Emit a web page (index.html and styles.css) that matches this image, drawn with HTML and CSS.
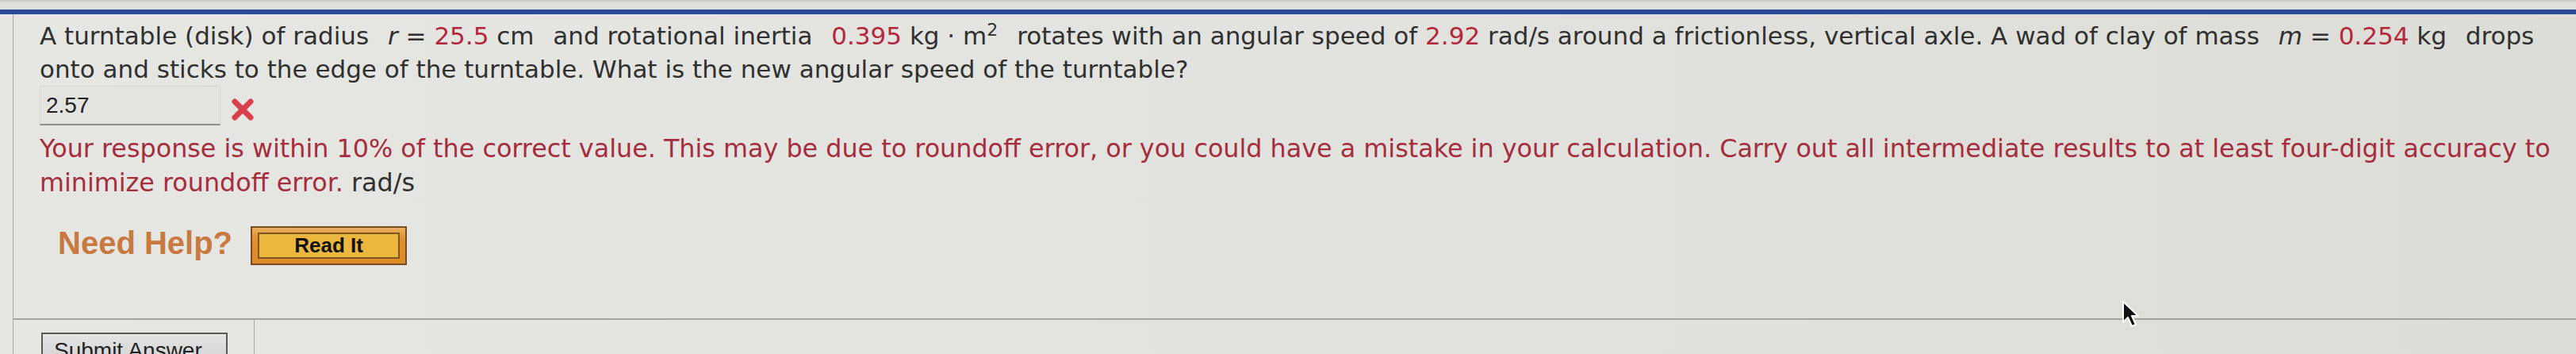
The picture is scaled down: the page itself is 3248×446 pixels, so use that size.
FILE: index.html
```html
<!DOCTYPE html>
<html lang="en">
<head>
    <meta charset="UTF-8">
    <title>Turntable question</title>
    <link rel="stylesheet" href="styles.css">
</head>
<body>
    <div class="chrome"></div>
    <div class="rule"></div>

    <div class="panel">
        <div class="content">
            <p class="question">
                A turntable (disk) of radius <span class="math"><i>r</i> = <span class="val">25.5</span> cm</span> and rotational inertia <span class="math"><span class="val">0.395</span> kg &middot; m<sup>2</sup></span> rotates with an angular speed of <span class="val">2.92</span> rad/s around a frictionless, vertical axle. A wad of clay of mass <span class="math"><i>m</i> = <span class="val">0.254</span> kg</span> drops<br>
                onto and sticks to the edge of the turntable. What is the new angular speed of the turntable?
            </p>

            <div class="answer-row">
                <div class="answer-box">2.57</div>
                <svg class="wrong" width="30" height="30" viewBox="0 0 30 30">
                    <path d="M5 5 L25 25 M25 5 L5 25" stroke="#d8404a" stroke-width="7" stroke-linecap="round"/>
                </svg>
            </div>

            <p class="feedback">
                Your response is within 10% of the correct value. This may be due to roundoff error, or you could have a mistake in your calculation. Carry out all intermediate results to at least four-digit accuracy to<br>
                minimize roundoff error. <span class="unit">rad/s</span>
            </p>

            <div class="help-row">
                <span class="need-help">Need Help?</span>
                <button class="read-it"><span class="read-it-inner">Read It</span></button>
            </div>
        </div>

        <div class="footer">
            <div class="footer-left">
                <button class="submit-btn">Submit Answer</button>
            </div>
            <div class="footer-right"></div>
        </div>
    </div>

    <!-- mouse pointer caught in the screenshot -->
    <svg class="pointer" width="26" height="36" viewBox="0 0 26 36">
        <path d="M2 2 L2 28 L8 22 L13 33 L18 31 L13 20 L21 20 Z" fill="#111" stroke="#fff" stroke-width="2" stroke-linejoin="round"/>
    </svg>
</body>
</html>
```

FILE: styles.css
```css
body {
    margin: 0;
    height: 446px;
    overflow: hidden;
    position: relative;
    background: linear-gradient(90deg, #e6e7e3 0%, #e2e3df 50%, #dcddd6 100%);
    font-family: 'DejaVu Sans', Verdana, sans-serif;
    color: #303030;
}
.chrome {
    height: 10px;
    border-top: 2px solid #c9cac6;
    background-color: #dedfdb;
}
.rule {
    height: 6px;
    background-color: #2b4a98;
}
.panel {
    margin-left: 16px;
    border-left: 1px solid #a9aaa6;
}
.content {
    padding: 6px 0 0 33px;
}
.question {
    margin: 0;
    font-size: 31px;
    line-height: 42px;
    white-space: nowrap;
}
.math {
    margin: 0 14px;
}
.val {
    color: #b3283c;
}
sup {
    font-size: 22px;
    line-height: 0;
}
.answer-row {
    display: flex;
    align-items: flex-end;
}
.answer-box {
    width: 219px;
    height: 32px;
    padding: 8px 0 7px 7px;
    border: 1px solid #d4d5d1;
    border-bottom: 2px solid #8f908c;
    background-color: #e3e4e0;
    font-family: 'Liberation Sans', Arial, sans-serif;
    font-size: 28px;
    line-height: 32px;
    color: #222;
}
.wrong {
    margin: 0 0 5px 13px;
}
.feedback {
    margin: 7px 0 0;
    font-size: 31.8px;
    line-height: 43px;
    color: #a52d3e;
    white-space: nowrap;
}
.unit {
    color: #303030;
}
.help-row {
    display: flex;
    align-items: flex-start;
    margin-top: 34px;
    padding-left: 23px;
}
.need-help {
    font-family: 'Liberation Sans', Arial, sans-serif;
    font-size: 40px;
    font-weight: bold;
    line-height: 42px;
    color: #c8793f;
}
.read-it {
    margin-left: 23px;
    padding: 6px 7px;
    border: 2px solid #7a4a22;
    background: linear-gradient(#eab060, #df8f2c 30%, #dd8a28);
    cursor: pointer;
}
.read-it-inner {
    display: block;
    width: 175px;
    height: 29px;
    border: 2px solid #7e5420;
    background-color: #ebb73c;
    font-family: 'Liberation Sans', Arial, sans-serif;
    font-size: 26px;
    font-weight: bold;
    line-height: 29px;
    color: #111;
}
.footer {
    display: grid;
    grid-template-columns: 303px 1fr;
    margin-top: 67px;
    border-top: 2px solid #a3a49f;
    height: 60px;
}
.footer-left {
    padding: 16px 0 0 35px;
}
.footer-right {
    border-left: 1px solid #a9aaa6;
}
.submit-btn {
    width: 235px;
    height: 46px;
    padding: 0 0 0 14px;
    text-align: left;
    border: 2px solid #595959;
    background: linear-gradient(#e4e4e4, #cfcfcf);
    font-family: 'Liberation Sans', Arial, sans-serif;
    font-size: 28px;
    color: #222;
}
.pointer {
    position: absolute;
    left: 2675px;
    top: 378px;
}
```
